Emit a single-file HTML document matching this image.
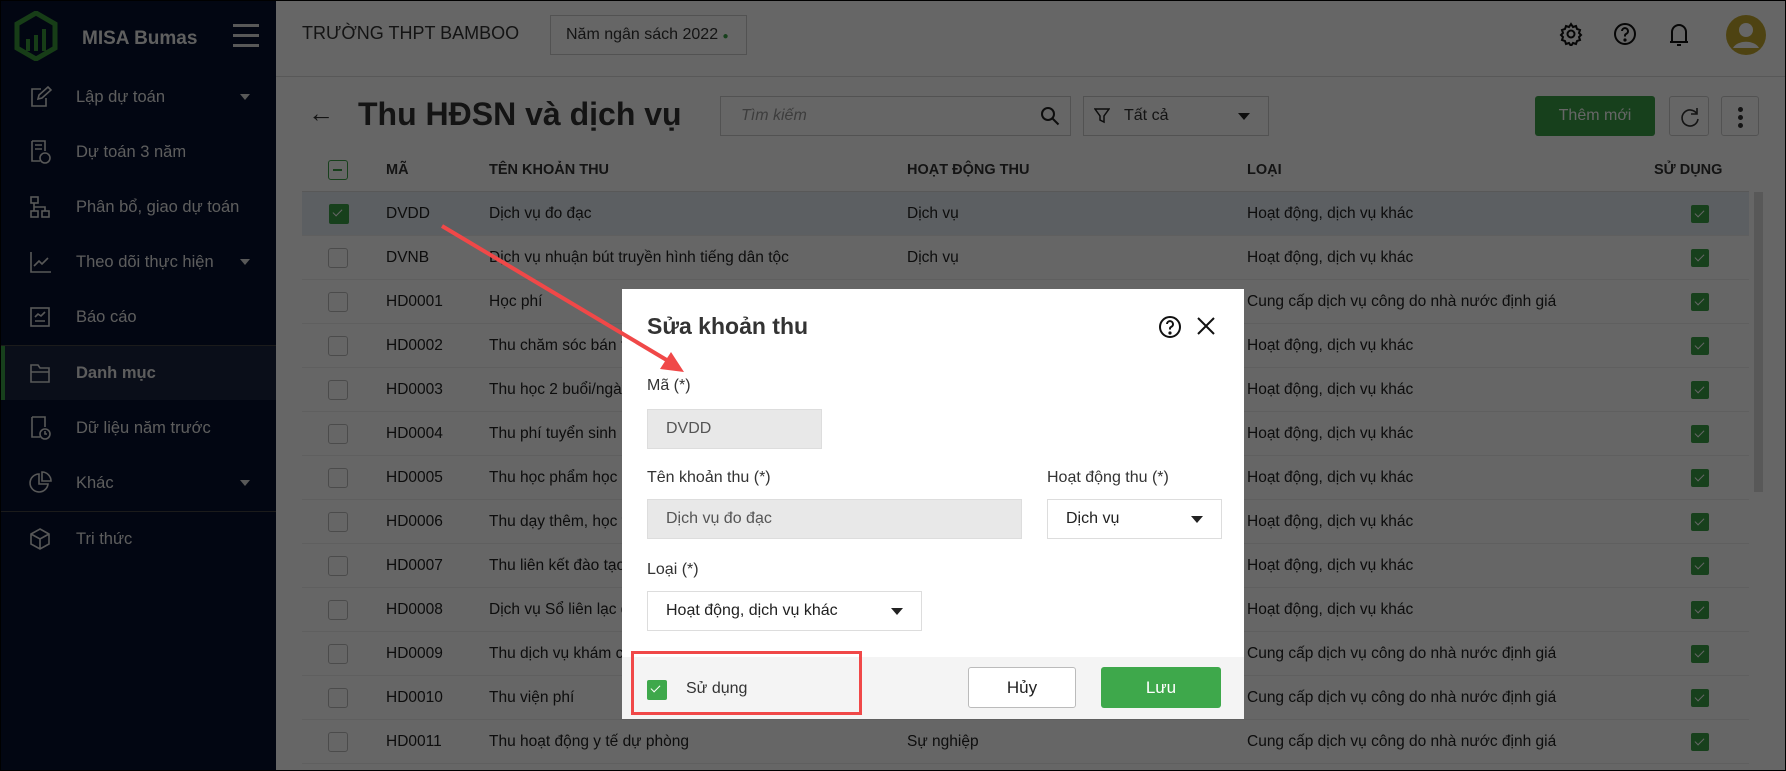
<!DOCTYPE html>
<html><head><meta charset="utf-8">
<style>
*{box-sizing:border-box;margin:0;padding:0}
body{width:1786px;height:771px;overflow:hidden;font-family:"Liberation Sans",Arial,sans-serif;background:#fff;position:relative;color:#212121}
.abs{position:absolute}
#side{left:0;top:0;width:276px;height:771px;background:#06112e;color:#fff}
.mi{position:absolute;left:0;width:276px;height:54px;display:flex;align-items:center;font-size:16.5px;color:#e8e8e8}
.mi svg{position:absolute;left:28px}
.mi span{position:absolute;left:76px}
.mi .car{position:absolute;left:240px;width:0;height:0;border-left:5px solid transparent;border-right:5px solid transparent;border-top:6px solid #ddd}
.hdr{left:276px;top:0;width:1510px;height:77px;border-bottom:1px solid #ddd;background:#fff}
.th{position:absolute;top:148px;height:44px;line-height:44px;font-size:14.5px;font-weight:bold;color:#333}
.row{position:absolute;left:302px;width:1447px;height:44px;border-bottom:1px solid #eee;font-size:15.5px;line-height:44px}
.row div{position:absolute;white-space:nowrap}
.cb{position:absolute;width:20px;height:20px;border:1.5px solid #bbb;border-radius:3px;background:#fff}
.gc{position:absolute;width:18px;height:18px;background:#3aa046;border-radius:2px}
.gc:after{content:"";position:absolute;left:6px;top:3px;width:4px;height:8px;border:solid #fff;border-width:0 1.5px 1.5px 0;transform:rotate(45deg)}
#ov{left:0;top:0;width:1786px;height:771px;background:rgba(0,0,0,0.6)}
#modal{left:622px;top:289px;width:622px;height:430px;background:#fff}
.lbl{position:absolute;font-size:16px;color:#333}
.inp{position:absolute;height:40px;border:1px solid #ddd;font-size:16px;line-height:38px;padding-left:18px}
.dd:after{content:"";position:absolute;right:18px;top:16px;border-left:6px solid transparent;border-right:6px solid transparent;border-top:7px solid #222}
</style></head><body>

<div id="side" class="abs">
  <svg class="abs" style="left:14px;top:11px" width="44" height="50" viewBox="0 0 44 50"><path d="M22 2 L41 13 L41 37 L22 48 L3 37 L3 13 Z" fill="none" stroke="#3b9a3b" stroke-width="5"/><rect x="12" y="28" width="4" height="12" fill="#3b9a3b"/><rect x="20" y="24" width="4" height="16" fill="#3b9a3b"/><rect x="28" y="18" width="4" height="22" fill="#3b9a3b"/></svg>
  <div class="abs" style="left:82px;top:28px;font-size:19px;font-weight:bold;color:#eee">MISA Bumas</div>
  <div class="abs" style="left:233px;top:24px;width:26px;height:3px;background:#ddd;box-shadow:0 10px 0 #ddd,0 20px 0 #ddd"></div>
  <div class="mi" style="top:70px"><svg width="24" height="24" viewBox="0 0 24 24" fill="none" stroke="#ddd" stroke-width="1.6"><path d="M13 4H4v17h14v-8M10 14l1-4 9-8 3 3-9 8z"/></svg><span>Lập dự toán</span><i class="car"></i></div>
  <div class="mi" style="top:125px"><svg width="24" height="26" viewBox="0 0 24 26" fill="none" stroke="#ddd" stroke-width="1.6"><path d="M4 2h13v10M4 2v20h8M7 6h7M7 10h7"/><circle cx="17" cy="19" r="5"/></svg><span>Dự toán 3 năm</span></div>
  <div class="mi" style="top:180px"><svg width="24" height="24" viewBox="0 0 24 24" fill="none" stroke="#ddd" stroke-width="1.6"><rect x="3" y="2" width="7" height="6"/><rect x="3" y="16" width="7" height="6"/><rect x="14" y="16" width="7" height="6"/><path d="M6 8v8M6 12h11v4"/></svg><span>Phân bổ, giao dự toán</span></div>
  <div class="mi" style="top:235px"><svg width="24" height="24" viewBox="0 0 24 24" fill="none" stroke="#ddd" stroke-width="1.6"><path d="M3 2v20h20M6 16l5-5 3 3 6-6"/></svg><span>Theo dõi thực hiện</span><i class="car"></i></div>
  <div class="mi" style="top:290px"><svg width="24" height="24" viewBox="0 0 24 24" fill="none" stroke="#ddd" stroke-width="1.6"><rect x="3" y="3" width="18" height="18"/><path d="M7 16h10M7 12l3-3 3 2 4-4"/></svg><span>Báo cáo</span></div>
  <div class="abs" style="left:0;top:345px;width:276px;height:1px;background:#444"></div>
  <div class="abs" style="left:0;top:346px;width:276px;height:54px;background:#1b2540"></div>
  <div class="abs" style="left:0;top:346px;width:5px;height:54px;background:#3aa046"></div>
  <div class="mi" style="top:346px"><svg width="24" height="24" viewBox="0 0 24 24" fill="none" stroke="#ddd" stroke-width="1.6"><path d="M3 4h7l2 3h9v14H3zM3 11h18"/></svg><span style="font-weight:bold">Danh mục</span></div>
  <div class="mi" style="top:401px"><svg width="24" height="26" viewBox="0 0 24 26" fill="none" stroke="#ddd" stroke-width="1.6"><path d="M4 2h13v10M4 2v20h8"/><circle cx="17" cy="19" r="5"/><path d="M17 16v3h2"/></svg><span>Dữ liệu năm trước</span></div>
  <div class="mi" style="top:456px"><svg width="24" height="24" viewBox="0 0 24 24" fill="none" stroke="#ddd" stroke-width="1.6"><path d="M11 3a9 9 0 1 0 9 10h-9zM14 1v9h9a9 9 0 0 0-9-9z"/></svg><span>Khác</span><i class="car"></i></div>
  <div class="abs" style="left:0;top:511px;width:276px;height:1px;background:#444"></div>
  <div class="mi" style="top:512px"><svg width="24" height="24" viewBox="0 0 24 24" fill="none" stroke="#ddd" stroke-width="1.6"><path d="M12 2l9 5v10l-9 5-9-5V7zM3 7l9 5 9-5M12 12v10"/></svg><span>Tri thức</span></div>
</div>

<div class="abs hdr">
  <div class="abs" style="left:26px;top:23px;font-size:18px;color:#333">TRƯỜNG THPT BAMBOO</div>
  <div class="abs" style="left:274px;top:15px;width:197px;height:40px;border:1px solid #ccc;font-size:16px;line-height:38px;padding-left:15px;color:#333">Năm ngân sách 2022 <span style="color:#3aa046;font-size:10px">●</span></div>
  <svg class="abs" style="left:1283px;top:22px" width="24" height="24" viewBox="0 0 24 24" fill="none" stroke="#111" stroke-width="2"><circle cx="12" cy="12" r="3.5"/><path d="M12 2l2 3 3-1 1 3 3 1-1 3 2 2-2 2 1 3-3 1-1 3-3-1-2 3-2-3-3 1-1-3-3-1 1-3-2-2 2-2-1-3 3-1 1-3 3 1z"/></svg>
  <svg class="abs" style="left:1337px;top:22px" width="24" height="24" viewBox="0 0 24 24" fill="none" stroke="#111" stroke-width="2"><circle cx="12" cy="12" r="10"/><path d="M9 9a3 3 0 1 1 4 3c-1 .5-1 1-1 2.5"/><circle cx="12" cy="18" r=".6" fill="#111"/></svg>
  <svg class="abs" style="left:1392px;top:22px" width="22" height="26" viewBox="0 0 22 26" fill="none" stroke="#111" stroke-width="2"><path d="M4 20V10a7 7 0 0 1 14 0v10zM2 20h18M9 23h4"/></svg>
  <svg class="abs" style="left:1450px;top:15px" width="40" height="40" viewBox="0 0 40 40"><circle cx="20" cy="20" r="20" fill="#c4a82e"/><circle cx="20" cy="15" r="7" fill="#fff"/><path d="M7 33a14 10 0 0 1 26 0" fill="#fff"/></svg>
</div>

<div class="abs" style="left:308px;top:98px;font-size:26px;color:#333">←</div>
<div class="abs" style="left:358px;top:96px;font-size:32px;font-weight:bold;color:#333">Thu HĐSN và dịch vụ</div>
<div class="abs" style="left:720px;top:96px;width:351px;height:40px;border:1px solid #ccc;font-size:16px;font-style:italic;color:#999;line-height:38px;padding-left:20px">Tìm kiếm
  <svg class="abs" style="right:10px;top:9px" width="20" height="20" viewBox="0 0 20 20" fill="none" stroke="#222" stroke-width="2"><circle cx="8" cy="8" r="6"/><path d="M12.5 12.5l6 6"/></svg></div>
<div class="abs dd" style="left:1083px;top:96px;width:186px;height:40px;border:1px solid #ccc;font-size:16px;line-height:38px;padding-left:40px;color:#333">Tất cả
  <svg class="abs" style="left:10px;top:11px" width="16" height="16" viewBox="0 0 16 16" fill="none" stroke="#222" stroke-width="1.5"><path d="M1 1h14l-5 7v6l-4-2V8z"/></svg></div>
<div class="abs" style="left:1535px;top:96px;width:120px;height:40px;background:#3aa046;border-radius:3px;color:#fff;font-size:16px;line-height:40px;text-align:center">Thêm mới</div>
<div class="abs" style="left:1669px;top:96px;width:40px;height:40px;border:1px solid #ccc;border-radius:3px"><svg class="abs" style="left:9px;top:9px" width="22" height="22" viewBox="0 0 22 22" fill="none" stroke="#333" stroke-width="1.6"><path d="M18 8A8 8 0 1 0 19 13M18 2v6h-6"/></svg></div>
<div class="abs" style="left:1721px;top:96px;width:38px;height:40px;border:1px solid #ccc;border-radius:3px"><div class="abs" style="left:16px;top:10px;width:5px;height:5px;border-radius:50%;background:#333;box-shadow:0 8px 0 #333,0 16px 0 #333"></div></div>

<div class="abs" style="left:302px;top:191px;width:1447px;height:1px;background:#ddd"></div>
<div class="cb" style="left:328px;top:160px;border-color:#3aa046"><div class="abs" style="left:4px;top:8px;width:9px;height:1.5px;background:#3aa046"></div></div>
<div class="th" style="left:386px">MÃ</div>
<div class="th" style="left:489px">TÊN KHOẢN THU</div>
<div class="th" style="left:907px">HOẠT ĐỘNG THU</div>
<div class="th" style="left:1247px">LOẠI</div>
<div class="th" style="left:1654px">SỬ DỤNG</div>
<div class="abs" style="left:1754px;top:192px;width:9px;height:300px;background:#ddd"></div>

<div class="row" style="top:192px;background:#e6eef4"><div class="gc" style="left:27px;top:12px;width:20px;height:20px"></div><div style="left:84px">DVDD</div><div style="left:187px">Dịch vụ đo đạc</div><div style="left:605px">Dịch vụ</div><div style="left:945px">Hoạt động, dịch vụ khác</div><div class="gc" style="left:1389px;top:13px"></div></div>
<div class="row" style="top:236px"><div class="cb" style="left:26px;top:12px"></div><div style="left:84px">DVNB</div><div style="left:187px">Dịch vụ nhuận bút truyền hình tiếng dân tộc</div><div style="left:605px">Dịch vụ</div><div style="left:945px">Hoạt động, dịch vụ khác</div><div class="gc" style="left:1389px;top:13px"></div></div>
<div class="row" style="top:280px"><div class="cb" style="left:26px;top:12px"></div><div style="left:84px">HD0001</div><div style="left:187px">Học phí</div><div style="left:945px">Cung cấp dịch vụ công do nhà nước định giá</div><div class="gc" style="left:1389px;top:13px"></div></div>
<div class="row" style="top:324px"><div class="cb" style="left:26px;top:12px"></div><div style="left:84px">HD0002</div><div style="left:187px">Thu chăm sóc bán trú</div><div style="left:945px">Hoạt động, dịch vụ khác</div><div class="gc" style="left:1389px;top:13px"></div></div>
<div class="row" style="top:368px"><div class="cb" style="left:26px;top:12px"></div><div style="left:84px">HD0003</div><div style="left:187px">Thu học 2 buổi/ngày</div><div style="left:945px">Hoạt động, dịch vụ khác</div><div class="gc" style="left:1389px;top:13px"></div></div>
<div class="row" style="top:412px"><div class="cb" style="left:26px;top:12px"></div><div style="left:84px">HD0004</div><div style="left:187px">Thu phí tuyển sinh</div><div style="left:945px">Hoạt động, dịch vụ khác</div><div class="gc" style="left:1389px;top:13px"></div></div>
<div class="row" style="top:456px"><div class="cb" style="left:26px;top:12px"></div><div style="left:84px">HD0005</div><div style="left:187px">Thu học phẩm học sinh</div><div style="left:945px">Hoạt động, dịch vụ khác</div><div class="gc" style="left:1389px;top:13px"></div></div>
<div class="row" style="top:500px"><div class="cb" style="left:26px;top:12px"></div><div style="left:84px">HD0006</div><div style="left:187px">Thu dạy thêm, học thêm</div><div style="left:945px">Hoạt động, dịch vụ khác</div><div class="gc" style="left:1389px;top:13px"></div></div>
<div class="row" style="top:544px"><div class="cb" style="left:26px;top:12px"></div><div style="left:84px">HD0007</div><div style="left:187px">Thu liên kết đào tạo</div><div style="left:945px">Hoạt động, dịch vụ khác</div><div class="gc" style="left:1389px;top:13px"></div></div>
<div class="row" style="top:588px"><div class="cb" style="left:26px;top:12px"></div><div style="left:84px">HD0008</div><div style="left:187px">Dịch vụ Sổ liên lạc điện tử</div><div style="left:945px">Hoạt động, dịch vụ khác</div><div class="gc" style="left:1389px;top:13px"></div></div>
<div class="row" style="top:632px"><div class="cb" style="left:26px;top:12px"></div><div style="left:84px">HD0009</div><div style="left:187px">Thu dịch vụ khám chữa bệnh</div><div style="left:945px">Cung cấp dịch vụ công do nhà nước định giá</div><div class="gc" style="left:1389px;top:13px"></div></div>
<div class="row" style="top:676px"><div class="cb" style="left:26px;top:12px"></div><div style="left:84px">HD0010</div><div style="left:187px">Thu viện phí</div><div style="left:945px">Cung cấp dịch vụ công do nhà nước định giá</div><div class="gc" style="left:1389px;top:13px"></div></div>
<div class="row" style="top:720px"><div class="cb" style="left:26px;top:12px"></div><div style="left:84px">HD0011</div><div style="left:187px">Thu hoạt động y tế dự phòng</div><div style="left:605px">Sự nghiệp</div><div style="left:945px">Cung cấp dịch vụ công do nhà nước định giá</div><div class="gc" style="left:1389px;top:13px"></div></div>

<div id="ov" class="abs"></div>

<div id="modal" class="abs">
  <div class="abs" style="left:25px;top:24px;font-size:23px;font-weight:bold;color:#333">Sửa khoản thu</div>
  <svg class="abs" style="left:536px;top:26px" width="24" height="24" viewBox="0 0 24 24" fill="none" stroke="#111" stroke-width="2"><circle cx="12" cy="12" r="10"/><path d="M9 9a3 3 0 1 1 4 3c-1 .5-1 1-1 2.5"/><circle cx="12" cy="18" r=".6" fill="#111"/></svg>
  <svg class="abs" style="left:574px;top:27px" width="20" height="20" viewBox="0 0 20 20" stroke="#111" stroke-width="2"><path d="M2 2l16 16M18 2L2 18"/></svg>
  <div class="lbl" style="left:25px;top:88px">Mã (*)</div>
  <div class="inp" style="left:25px;top:120px;width:175px;background:#e8e8e8;color:#555">DVDD</div>
  <div class="lbl" style="left:25px;top:180px">Tên khoản thu (*)</div>
  <div class="inp" style="left:25px;top:210px;width:375px;background:#e8e8e8;color:#555">Dịch vụ đo đạc</div>
  <div class="lbl" style="left:425px;top:180px">Hoạt động thu (*)</div>
  <div class="inp dd" style="left:425px;top:210px;width:175px">Dịch vụ</div>
  <div class="lbl" style="left:25px;top:272px">Loại (*)</div>
  <div class="inp dd" style="left:25px;top:302px;width:275px">Hoạt động, dịch vụ khác</div>
  <div class="abs" style="left:0;top:368px;width:622px;height:62px;background:#f4f4f4"></div>
  <div class="gc" style="left:25px;top:391px;width:20px;height:20px;background:#3ea84b"></div>
  <div class="lbl" style="left:64px;top:391px">Sử dụng</div>
  <div class="abs" style="left:346px;top:378px;width:108px;height:41px;border:1px solid #bbb;border-radius:3px;background:#fff;font-size:17px;line-height:39px;text-align:center">Hủy</div>
  <div class="abs" style="left:479px;top:378px;width:120px;height:41px;background:#3ea84b;border-radius:3px;color:#fff;font-size:17px;line-height:41px;text-align:center">Lưu</div>
</div>
<div class="abs" style="left:631px;top:651px;width:231px;height:64px;border:3px solid #f04848"></div>
<svg class="abs" style="left:0;top:0" width="1786" height="771"><line x1="442" y1="226" x2="670" y2="362" stroke="#f04848" stroke-width="4"/><path d="M684 372 L660 369 L671 352 Z" fill="#f04848"/></svg>
<div class="abs" style="left:0;top:0;width:1786px;height:771px;border:1px solid #000"></div>
</body></html>
